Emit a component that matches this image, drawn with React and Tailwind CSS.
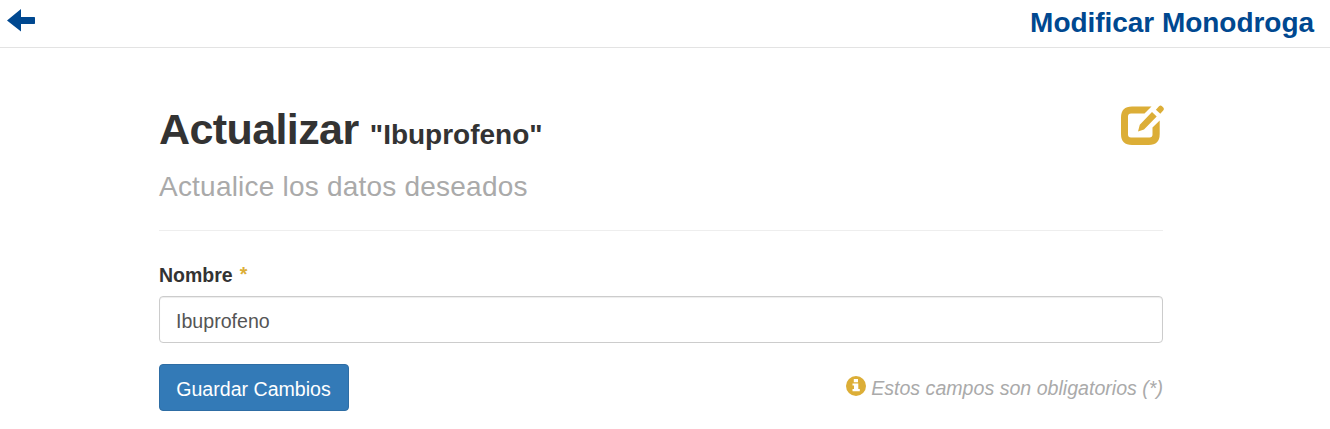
export default function App() {
  return (
    <div className="h-[429px] w-full overflow-hidden bg-white font-['Liberation_Sans',Arial,sans-serif] text-[#333]">
      <header className="flex h-12 items-start justify-between border-b border-[#e3e3e3] pl-[7px] pr-4 text-[#004890]">
        <svg className="mt-[9px] h-[23px] w-7" viewBox="0 0 28 23" fill="currentColor">
          <path d="M0 11.500 14 0V8H27.300Q28 8 28 8.700V14.300Q28 15 27.300 15H14V22.500Z" />
        </svg>
        <h1 className="mt-[7px] text-[28px] font-bold leading-[31px] tracking-[-0.04px]">Modificar Monodroga</h1>
      </header>
      <main className="ml-[159px] w-[1004px]">
        <div className="flex h-[116px] items-start justify-between pt-[56px]">
          <h2 className="text-[43px] font-bold leading-[50px]">
            <span className="tracking-[-0.6px]">Actualizar </span>
            <span className="text-[28px]">"Ibuprofeno"</span>
          </h2>
          <svg className="-mr-[1px] mt-[1px] h-10 w-[43px] text-[#dcae37]" viewBox="0 0 43 40" fill="currentColor">
            <path d="M30.500 1.500H11Q0 1.500 0 12.500V29Q0 40 11 40H27.700Q38.700 40 38.700 29V15.500L31.500 22.500V29.500Q31.500 32.500 28.500 32.500H10Q7 32.500 7 29.500V11.500Q7 8.500 10 8.500H23.500Z" />
            <path d="M17 26.500 18.800 19.800 31 7 35.700 11.600 23 24.500Z M34.900 4.700 38 1.300Q39.500 0 41 1.200L42.300 2.500Q43.500 4 42.200 5.500L39.300 8.800Z" />
          </svg>
        </div>
        <p className="h-[66px] pt-[7px] text-[28px] leading-[32px] tracking-[0.215px] text-[#aaa]">Actualice los datos deseados</p>
        <hr className="border-[#eee]" />
        <form onSubmit={(e) => e.preventDefault()}>
          <label htmlFor="nombre" className="flex h-[65px] pt-[30px] text-[19.500px] font-bold leading-[28px]">
            Nombre <span className="-mt-px ml-[7px] text-[19.500px] text-[#dcae37]">*</span>
          </label>
          <input id="nombre" defaultValue="Ibuprofeno" className="block h-[47px] w-full rounded-[4px] border border-[#ccc] px-4 pt-[3px] text-[19.600px] text-[#555] shadow-[inset_0_1px_1px_rgba(0,0,0,0.075)] outline-none" />
          <div className="mt-[21px] flex items-start justify-between">
            <button className="h-[47px] w-[190px] rounded-[4px] border border-[#2e6da4] bg-[#337ab7] pr-px pt-[4px] text-[19.600px] text-white">Guardar Cambios</button>
            <div className="flex items-center pt-[10px] text-[19.600px] italic leading-[28px] text-[#aaa]">
              <svg className="-mt-[5px] mr-[5px] size-5" viewBox="0 0 20 20">
                <circle cx="10" cy="10" r="10" fill="#dcae37" />
                <path d="M7.800 3h4.200v3.200H7.800Z M6.500 7.500H12.300V13H13.800V15.300H6.500V13H8V9.500H6.500Z" fill="white" />
              </svg>
              Estos campos son obligatorios (*)
            </div>
          </div>
        </form>
      </main>
    </div>
  );
}
